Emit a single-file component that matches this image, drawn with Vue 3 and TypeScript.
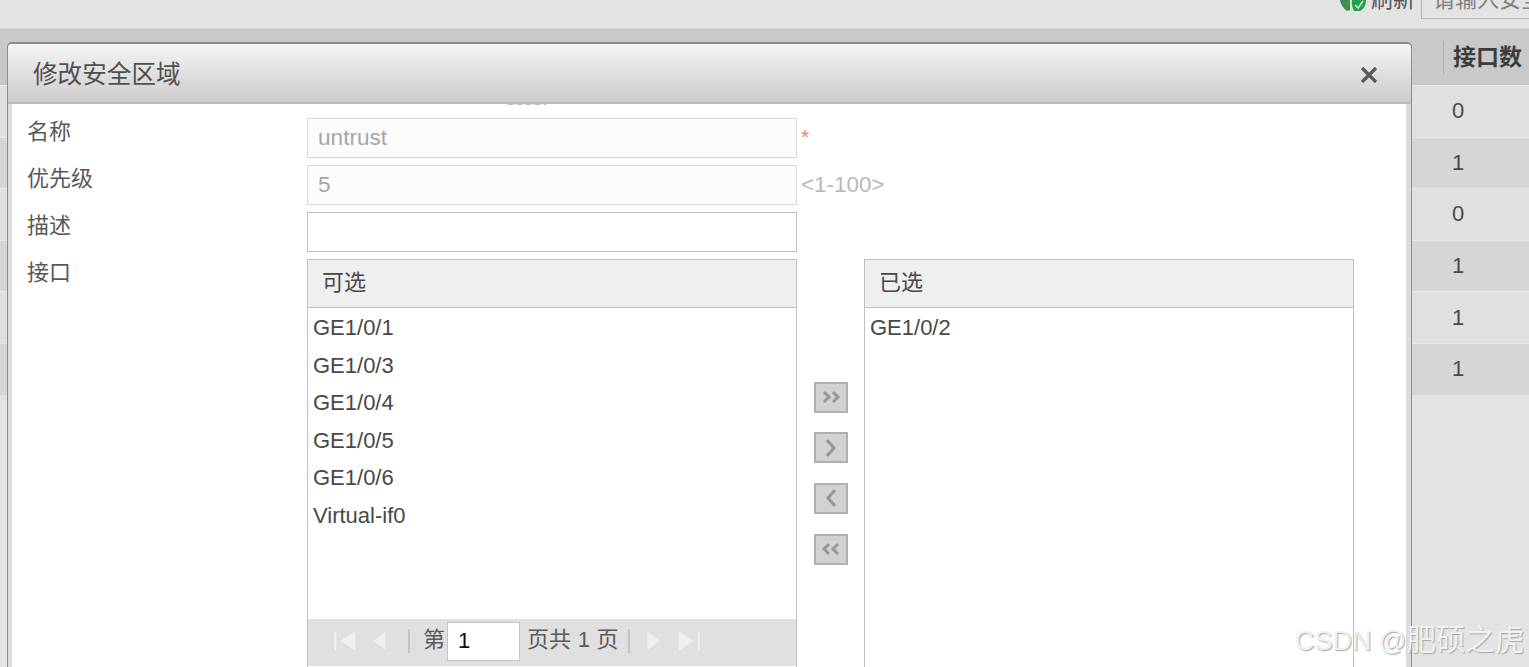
<script setup lang="ts">
const rows: string[] = ['0', '1', '0', '1', '1', '1']
const available: string[] = ['GE1/0/1', 'GE1/0/3', 'GE1/0/4', 'GE1/0/5', 'GE1/0/6', 'Virtual-if0']
const selected: string[] = ['GE1/0/2']
</script>

<template>
  <div class="page">
    <div class="topbar">
      <svg class="refresh" width="26" height="12" viewBox="0 0 26 12">
        <path d="M0 0 L10 0 L10 10 L7 11 Q1 7 0 0Z" fill="#3f8f4e" />
        <path d="M12 0 L26 0 Q26 8 20 11 L14 11 Q11 5 12 0Z" fill="#25a04a" />
        <path d="M15 5 L18 8 L23 1" fill="none" stroke="#cfe9d2" stroke-width="1.5" />
      </svg>
      <span class="refresh-text">刷新</span>
      <div class="search"><span>请输入安全区域</span></div>
    </div>
    <div class="thead">
      <div class="th"><span>接口数</span></div>
    </div>
    <div v-for="(v, i) in rows" :key="i" class="tr" :class="{ odd: i % 2 === 1 }">
      <div class="td">{{ v }}</div>
    </div>

    <section class="dialog">
      <header class="dialog-title">
        <h2>修改安全区域</h2>
        <svg class="close" width="18" height="18" viewBox="0 0 18 18">
          <path d="M2 2 L16 16 M16 2 L2 16" stroke="#5a5a5a" stroke-width="3.2" fill="none" />
        </svg>
      </header>
      <div class="dialog-body">
        <i class="sliver"></i>
        <div class="field">
          <label>名称</label>
          <div class="input disabled">untrust</div>
          <span class="star">*</span>
        </div>
        <div class="field">
          <label>优先级</label>
          <div class="input disabled">5</div>
          <span class="hint">&lt;1-100&gt;</span>
        </div>
        <div class="field">
          <label>描述</label>
          <div class="input"></div>
        </div>
        <div class="field">
          <label>接口</label>
          <div class="picker">
            <div class="pane">
              <div class="pane-head">可选</div>
              <ul class="list">
                <li v-for="a in available" :key="a">{{ a }}</li>
              </ul>
              <div class="pager">
                <svg width="25" height="24" viewBox="0 0 25 24">
                  <path d="M0.5 2 H4 V22 H0.5Z M23 1 V23 L6 12Z" fill="#efefef" stroke="#dcdcdc" stroke-width="1" />
                </svg>
                <svg class="prev" width="18" height="24" viewBox="0 0 18 24">
                  <path d="M16 2 V22 L2 12Z" fill="#efefef" stroke="#dcdcdc" stroke-width="1" />
                </svg>
                <i class="sep"></i>
                <span class="pg-a">第</span>
                <div class="pg-input">1</div>
                <span class="pg-b">页共 1 页</span>
                <i class="sep sep2"></i>
                <svg class="next" width="18" height="24" viewBox="0 0 18 24">
                  <path d="M2 2 V22 L16 12Z" fill="#efefef" stroke="#dcdcdc" stroke-width="1" />
                </svg>
                <svg class="last" width="25" height="24" viewBox="0 0 25 24">
                  <path d="M20 2 H23.5 V22 H20Z M1 1 V23 L18 12Z" fill="#efefef" stroke="#dcdcdc" stroke-width="1" />
                </svg>
              </div>
            </div>
            <div class="moves">
              <button class="mv">
                <svg width="20" height="14" viewBox="0 0 20 14"><path d="M3 2 L8 7 L3 12 M12 2 L17 7 L12 12" fill="none" stroke="#96969e" stroke-width="3" /></svg>
              </button>
              <button class="mv">
                <svg width="12" height="20" viewBox="0 0 12 20"><path d="M2 2 L9 10 L2 18" fill="none" stroke="#96969e" stroke-width="3" /></svg>
              </button>
              <button class="mv">
                <svg width="12" height="20" viewBox="0 0 12 20"><path d="M10 2 L3 10 L10 18" fill="none" stroke="#96969e" stroke-width="3" /></svg>
              </button>
              <button class="mv">
                <svg width="20" height="14" viewBox="0 0 20 14"><path d="M8 2 L3 7 L8 12 M17 2 L12 7 L17 12" fill="none" stroke="#96969e" stroke-width="3" /></svg>
              </button>
            </div>
            <div class="pane">
              <div class="pane-head">已选</div>
              <ul class="list">
                <li v-for="s in selected" :key="s">{{ s }}</li>
              </ul>
            </div>
          </div>
        </div>
      </div>
    </section>

    <div class="watermark">CSDN @<span>肥硕之虎</span></div>
  </div>
</template>

<style>
html, body { margin: 0; padding: 0; overflow: hidden; }
</style>

<style scoped>
.page {
  position: relative;
  width: 1529px;
  height: 667px;
  overflow: hidden;
  background: #e3e3e3;
  font-family: "Liberation Sans", "Noto Sans CJK SC", sans-serif;
  color: #484848;
}
.topbar {
  height: 28px;
  border-bottom: 1px solid #d4d4d4;
  display: flex;
  justify-content: flex-end;
  align-items: flex-start;
  overflow: hidden;
  box-sizing: content-box;
}
.refresh { margin-right: 5px; flex: none; }
.refresh-text {
  font-size: 22px;
  line-height: 22px;
  margin-top: -11px;
  color: #555;
  margin-right: 6px;
  flex: none;
}
.search {
  flex: none;
  width: 108px;
  height: 19px;
  box-sizing: border-box;
  border: 1px solid #b4b4b4;
  border-top: 0;
  border-right: 0;
  font-size: 22px;
  line-height: 22px;
  padding-left: 11px;
  color: #808080;
  white-space: nowrap;
  overflow: hidden;
}
.search span { display: block; margin-top: -11px; }
.thead {
  height: 56px;
  background: #c9c9c9;
  display: flex;
  justify-content: flex-end;
  align-items: center;
}
.th {
  width: 86px;
  box-sizing: border-box;
  height: 33px;
  border-left: 1px solid #adadad;
  padding-left: 9px;
  font-size: 23px;
  font-weight: 700;
  line-height: 32px;
  color: #3c3c3c;
  white-space: nowrap;
}
.tr {
  height: 51.6px;
  background: #e0e0e0;
  border-top: 1px solid #e9e9e9;
  box-sizing: border-box;
  display: flex;
  justify-content: flex-end;
  align-items: center;
}
.tr.odd { background: #d6d6d6; }
.td {
  width: 86px;
  box-sizing: border-box;
  padding-left: 9px;
  font-size: 22px;
  color: #4a4a4a;
}
.dialog {
  position: absolute;
  left: 7px;
  top: 42px;
  width: 1405px;
  height: 680px;
  box-sizing: border-box;
  border: 1px solid #8c8c8c;
  border-top: 2px solid #8c8c8c;
  border-bottom: 0;
  border-radius: 5px 5px 0 0;
  background: #dcdcdc;
  display: flex;
  flex-direction: column;
}
.dialog-title {
  height: 58px;
  flex: none;
  background: linear-gradient(#f4f4f4, #cdcdcd);
  border-radius: 4px 4px 0 0;
  display: flex;
  align-items: center;
  justify-content: space-between;
  padding: 0 33px 0 25px;
  border-bottom: 2px solid #bcbcbc;
  box-sizing: content-box;
}
h2 {
  margin: 0;
  font-size: 24.6px;
  font-weight: 400;
  color: #505050;
  line-height: 60px;
  padding-top: 3px;
}
.close { margin-top: 3px; }
.dialog-body {
  flex: 1;
  position: relative;
  margin: 0 5px 0 4px;
  background: #fff;
  padding: 14px 0 0 15px;
  display: flex;
  flex-direction: column;
  gap: 7px;
}
.sliver {
  position: absolute;
  left: 496px;
  top: 0;
  width: 38px;
  height: 1px;
  background: repeating-linear-gradient(90deg, #bbb 0 5px, #eee 5px 9px);
}
.field {
  display: flex;
  align-items: flex-start;
}
label {
  width: 280px;
  flex: none;
  font-size: 22px;
  line-height: 28px;
  color: #585858;
}
.input {
  width: 490px;
  height: 40px;
  box-sizing: border-box;
  border: 1px solid #bdbdc3;
  font-size: 22.6px;
  line-height: 38px;
  padding-left: 10px;
}
.input.disabled {
  border-color: #d8d8d8;
  background: #fcfcfc;
  color: #a6a6a6;
}
.star {
  margin-left: 4px;
  color: #f47c7c;
  font-size: 21px;
  line-height: 38px;
}
.hint {
  margin-left: 4px;
  color: #b9b9b9;
  font-size: 22.4px;
  line-height: 40px;
}
.picker {
  display: flex;
  align-items: stretch;
  height: 420px;
}
.pane {
  width: 490px;
  box-sizing: border-box;
  border: 1px solid #bdbdc3;
  display: flex;
  flex-direction: column;
}
.pane-head {
  height: 48px;
  flex: none;
  box-sizing: border-box;
  background: #efefef;
  border-bottom: 1px solid #bdbdc3;
  font-size: 22px;
  line-height: 46px;
  padding-left: 14px;
  color: #484848;
}
.list {
  list-style: none;
  margin: 0;
  padding: 1.3px 0 0 5px;
  height: 311px;
  flex: none;
  box-sizing: border-box;
}
.list li {
  height: 37.5px;
  line-height: 37.5px;
  font-size: 22px;
  color: #484848;
}
.pager {
  height: 47px;
  flex: none;
  box-sizing: border-box;
  background: #e0e0e0;
  display: flex;
  align-items: center;
  padding: 0 0 3px 25px;
  font-size: 22px;
  line-height: 30px;
  color: #5a5a5a;
}
.pager svg { flex: none; }
.pg-a, .pg-b { position: relative; top: -1px; }
.prev { margin-left: 12px; }
.sep {
  display: block;
  flex: none;
  width: 2px;
  height: 24px;
  background: #c4c4c4;
  margin-left: 20px;
}
.pg-a { margin-left: 13px; }
.pg-input {
  flex: none;
  width: 73px;
  height: 39px;
  box-sizing: border-box;
  border: 1px solid #c4c4c4;
  background: #fff;
  color: #111;
  line-height: 35px;
  padding-left: 10px;
  margin-left: 2px;
}
.pg-b { margin-left: 7px; white-space: nowrap; word-spacing: 0.5px; }
.sep2 { margin-left: 10px; }
.next { margin-left: 15px; }
.last { margin-left: 14px; }
.moves {
  width: 67px;
  flex: none;
  display: flex;
  flex-direction: column;
  align-items: center;
  gap: 19.7px;
  padding-top: 122.6px;
  box-sizing: border-box;
}
.mv {
  flex: none;
  width: 34px;
  height: 31px;
  padding: 0;
  box-sizing: border-box;
  border: 2px solid #aeaeb4;
  background: #d2d2d2;
  display: flex;
  align-items: center;
  justify-content: center;
}
.watermark {
  position: absolute;
  left: 1295px;
  top: 623px;
  font-size: 27px;
  line-height: 34px;
  color: #f1f1f1;
  text-shadow: 1px 1px 1px #a8a8a8;
  white-space: nowrap;
}
.watermark span { font-size: 29.5px; }
</style>
